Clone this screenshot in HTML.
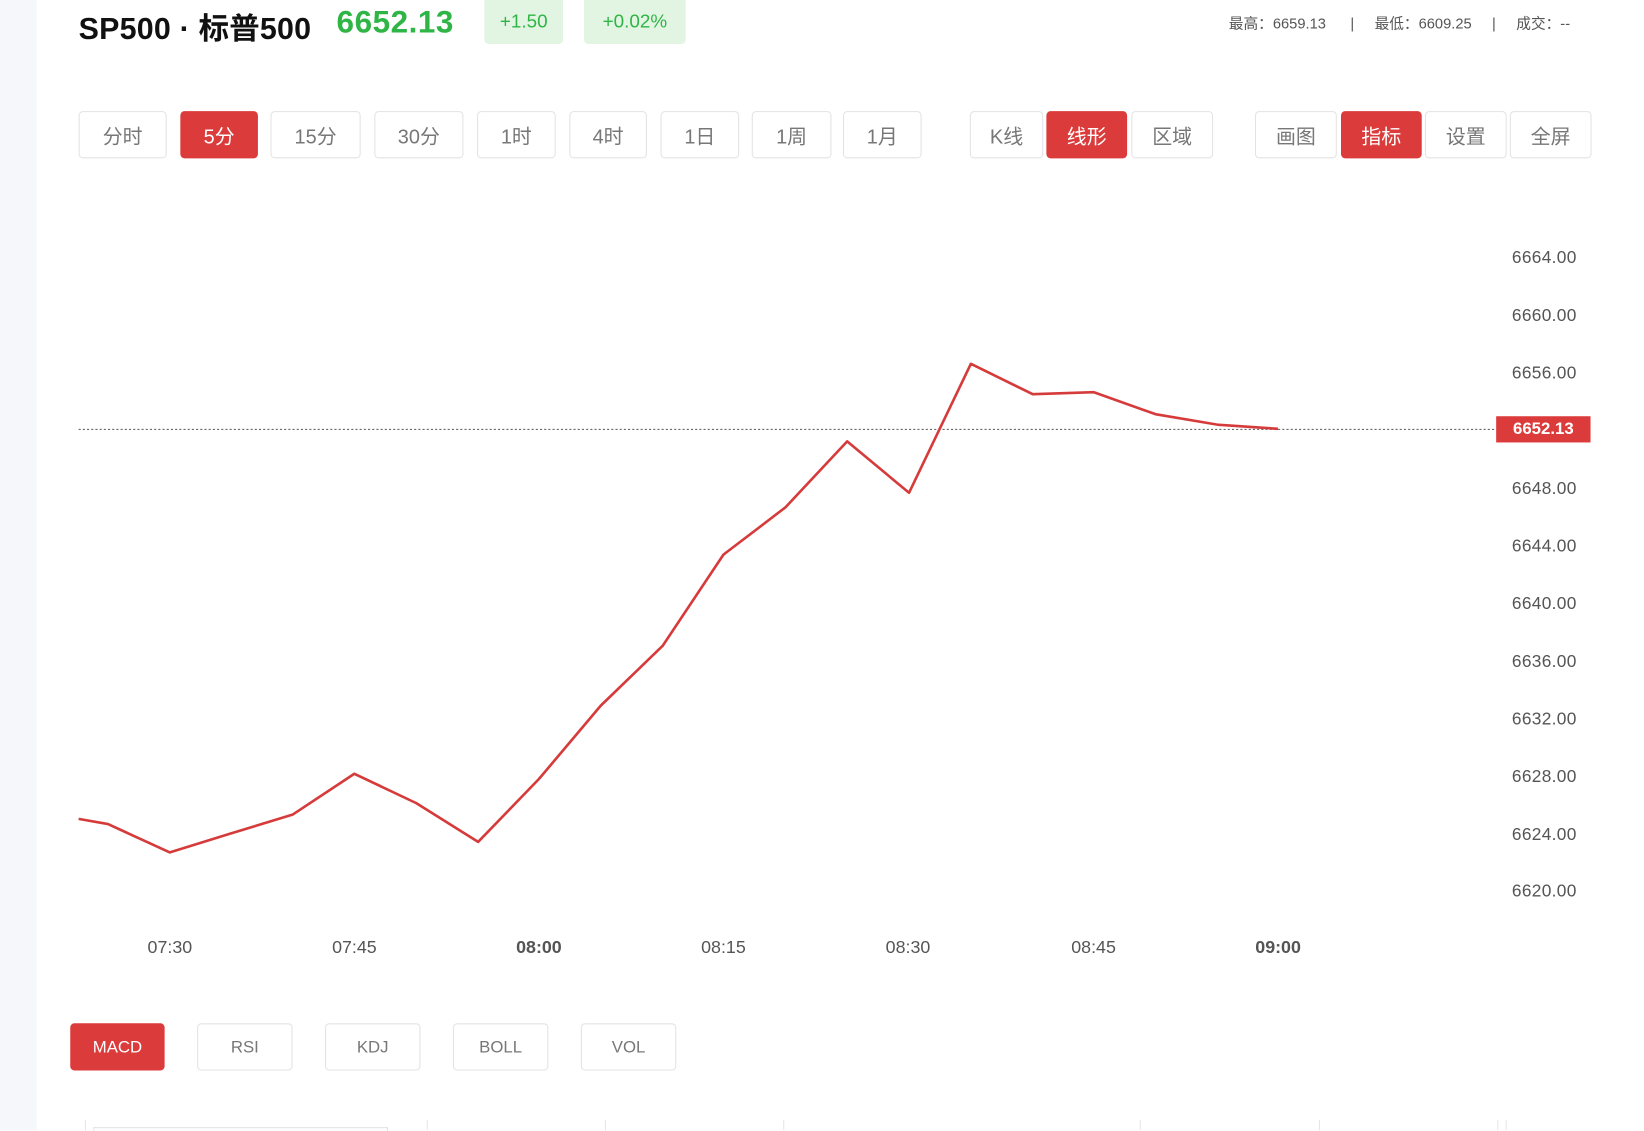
<!DOCTYPE html>
<html><head><meta charset="utf-8"><style>
html,body{margin:0;padding:0;width:1644px;height:1130px;overflow:hidden;background:#fff;font-family:"Liberation Sans","Noto Sans CJK SC",sans-serif}
#w{position:absolute;left:0;top:0;width:1568px;height:1078px;transform:scale(1.04847);transform-origin:0 0;background:#fff}
.side{position:absolute;left:0;top:0;width:35px;height:1078px;background:#f5f7fa}
.a{position:absolute;white-space:nowrap}
.b{position:absolute;top:106px;height:45px;border:1px solid #e3e3e3;border-radius:4px;box-sizing:border-box;color:#777;font-size:19px;display:flex;align-items:center;justify-content:center;background:#fff;padding-top:2px}
.r{background:#dc3b3b;border-color:#dc3b3b;color:#fff}
.i{top:976px;height:45px;font-size:16px}
.y{position:absolute;left:1442px;font-size:16.5px;color:#555;letter-spacing:0.3px}
.x{position:absolute;top:894px;font-size:17px;color:#555;transform:translateX(-50%)}
.g{position:absolute;top:1068px;width:1px;height:10px;background:#e6e6e6}
</style></head><body><div id="w">
<div class="side"></div>
<div class="a" style="left:75px;top:4px;font-size:29px;font-weight:bold;color:#111;letter-spacing:0.2px">SP500 · 标普500</div>
<div class="a" style="left:321px;top:5px;font-size:30px;font-weight:bold;color:#2fb545;letter-spacing:0.5px">6652.13</div>
<div class="a" style="left:462px;top:0;width:75px;height:42px;background:#e2f5e3;border-radius:0 0 4px 4px;color:#2fb545;font-size:18px;text-align:center;line-height:40px">+1.50</div>
<div class="a" style="left:557px;top:0;width:97px;height:42px;background:#e2f5e3;border-radius:0 0 4px 4px;color:#2fb545;font-size:18px;text-align:center;line-height:40px">+0.02%</div>
<div class="a" style="left:1172px;top:12px;font-size:14px;color:#555">最高：6659.13 &nbsp;&nbsp;&nbsp;&nbsp;&nbsp;| &nbsp;&nbsp;&nbsp;&nbsp;最低：6609.25 &nbsp;&nbsp;&nbsp;&nbsp;| &nbsp;&nbsp;&nbsp;&nbsp;成交：--</div>
<div class="b" style="left:75px;width:84px">分时</div>
<div class="b r" style="left:172px;width:74px">5分</div>
<div class="b" style="left:258px;width:86px">15分</div>
<div class="b" style="left:357px;width:85px">30分</div>
<div class="b" style="left:455px;width:75px">1时</div>
<div class="b" style="left:543px;width:74px">4时</div>
<div class="b" style="left:630px;width:75px">1日</div>
<div class="b" style="left:717px;width:76px">1周</div>
<div class="b" style="left:804px;width:75px">1月</div>
<div class="b" style="left:925px;width:70px">K线</div>
<div class="b r" style="left:998px;width:77px">线形</div>
<div class="b" style="left:1079px;width:78px">区域</div>
<div class="b" style="left:1197px;width:78px">画图</div>
<div class="b r" style="left:1279px;width:77px">指标</div>
<div class="b" style="left:1359px;width:78px">设置</div>
<div class="b" style="left:1440px;width:78px">全屏</div>
<div class="y" style="top:237px">6664.00</div>
<div class="y" style="top:292px">6660.00</div>
<div class="y" style="top:347px">6656.00</div>
<div class="y" style="top:457px">6648.00</div>
<div class="y" style="top:512px">6644.00</div>
<div class="y" style="top:567px">6640.00</div>
<div class="y" style="top:622px">6636.00</div>
<div class="y" style="top:677px">6632.00</div>
<div class="y" style="top:732px">6628.00</div>
<div class="y" style="top:787px">6624.00</div>
<div class="y" style="top:841px">6620.00</div>
<svg class="a" style="left:0;top:0" width="1568" height="1078">
<line x1="75" y1="409.5" x2="1427" y2="409.5" stroke="#555" stroke-width="1" stroke-dasharray="2,2"/>
<polyline fill="none" stroke="#d63b3b" stroke-width="2.5" stroke-linejoin="round" points="75,781 103,786 162,813 220,795 279,777 338,738 397,766 456,803 514,743 573,673 632,616 690,529 749,484 808,421 867,470 926,347 985,376 1043,374 1102,395 1161,405 1219,409"/>
</svg>
<div class="a" style="left:1427px;top:397px;width:90px;height:25px;background:#dc3b3b;color:#fff;font-size:16px;font-weight:bold;text-align:center;line-height:26px">6652.13</div>
<div class="x" style="left:162px">07:30</div>
<div class="x" style="left:338px">07:45</div>
<div class="x" style="left:514px;font-weight:bold">08:00</div>
<div class="x" style="left:690px">08:15</div>
<div class="x" style="left:866px">08:30</div>
<div class="x" style="left:1043px">08:45</div>
<div class="x" style="left:1219px;font-weight:bold">09:00</div>
<div class="b i r" style="left:67px;width:90px">MACD</div>
<div class="b i" style="left:188px;width:91px">RSI</div>
<div class="b i" style="left:310px;width:91px">KDJ</div>
<div class="b i" style="left:432px;width:91px">BOLL</div>
<div class="b i" style="left:554px;width:91px">VOL</div>
<div class="g" style="left:81px"></div><div class="g" style="left:407px"></div><div class="g" style="left:577px"></div><div class="g" style="left:747px"></div><div class="g" style="left:1087px"></div><div class="g" style="left:1258px"></div><div class="g" style="left:1428px"></div><div class="g" style="left:1436px"></div>
<div class="a" style="left:89px;top:1075px;width:279px;height:3px;border:1px solid #e3e3e3;border-bottom:0"></div>
</div></body></html>
